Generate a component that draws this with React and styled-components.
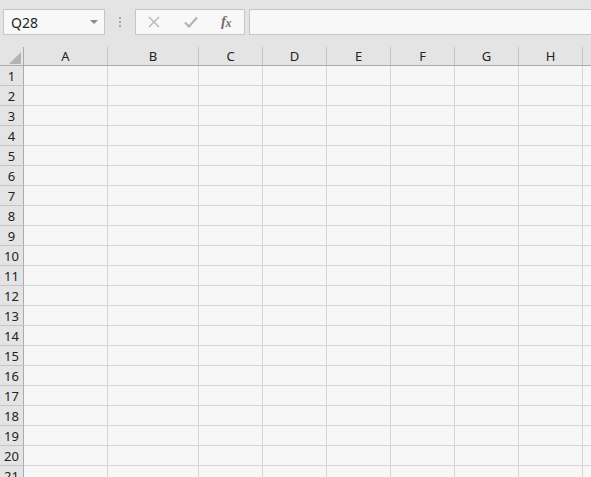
import React from "react";
import styled, { createGlobalStyle } from "styled-components";

const COLS = [
  { label: "A", width: 84 },
  { label: "B", width: 91 },
  { label: "C", width: 64 },
  { label: "D", width: 64 },
  { label: "E", width: 64 },
  { label: "F", width: 64 },
  { label: "G", width: 64 },
  { label: "H", width: 64 },
  { label: "", width: 64 },
];
const ROW_COUNT = 21;

const GlobalStyle = createGlobalStyle`
  html, body {
    margin: 0;
    padding: 0;
    height: 100%;
    overflow: hidden;
    background: #e8e8e8;
    font-family: "Segoe UI", "Noto Sans", "Liberation Sans", sans-serif;
  }
`;

const Sheet = styled.div`
  width: 591px;
  height: 477px;
  overflow: hidden;
  display: flex;
  flex-direction: column;
  background-color: #e8e8e8;
  background-image: radial-gradient(rgba(0, 0, 0, 0.035) 0.6px, transparent 0.8px);
  background-size: 2px 2px;
`;

const FormulaBar = styled.div`
  flex-shrink: 0;
  display: flex;
  align-items: flex-start;
  height: 47px;
  padding: 9px 0 0 3px;
  box-sizing: border-box;
`;

const Field = styled.div`
  height: 26px;
  box-sizing: border-box;
  border: 1px solid #c6c6c6;
  background: #f8f8f8;
  display: flex;
  align-items: center;
`;

const NameBox = styled(Field)`
  width: 102px;
  padding: 0 6px 0 7px;
  justify-content: space-between;
  font-size: 14px;
  color: #262626;
`;

const Caret = styled.span`
  width: 0;
  height: 0;
  border-left: 4px solid transparent;
  border-right: 4px solid transparent;
  border-top: 4px solid #8a8a8a;
`;

const Grip = styled.div`
  width: 30px;
  height: 26px;
  display: flex;
  flex-direction: column;
  align-items: center;
  justify-content: center;
  gap: 2px;

  span {
    width: 2px;
    height: 2px;
    background: #a6a6a6;
  }
`;

const ButtonBox = styled(Field)`
  width: 110px;
  padding: 0 13px 0 12px;
  justify-content: space-between;
`;

const Fx = styled.span`
  font-family: "Liberation Serif", "DejaVu Serif", serif;
  font-style: italic;
  font-weight: bold;
  font-size: 15px;
  color: #707070;
  letter-spacing: -0.5px;
  padding-bottom: 2px;

  sub {
    font-size: 12px;
    vertical-align: baseline;
    position: relative;
    top: 1px;
  }
`;

const FormulaInput = styled(Field)`
  flex: 1;
  margin-left: 4px;
  border-right: none;
`;

const Grid = styled.div`
  flex-shrink: 0;
  display: grid;
  grid-template-columns: 24px ${COLS.map((c) => `${c.width}px`).join(" ")};
  grid-template-rows: 19px;
  grid-auto-rows: 20px;
`;

const ColHeader = styled.div`
  box-sizing: border-box;
  border-right: 1px solid ${(p) => (p.corner ? "#ababab" : "#c4c4c4")};
  border-bottom: 1px solid #ababab;
  display: flex;
  justify-content: ${(p) => (p.corner ? "flex-end" : "center")};
  align-items: ${(p) => (p.corner ? "flex-end" : "center")};
  padding: ${(p) => (p.corner ? "0 2px 1px 0" : "0 0 1px 0")};
  font-size: 13px;
  color: #222;
`;

const RowHeader = styled.div`
  box-sizing: border-box;
  border-right: 1px solid #ababab;
  border-bottom: 1px solid #c4c4c4;
  display: flex;
  align-items: center;
  justify-content: center;
  padding-top: 1px;
  font-size: 13px;
  color: #222;
`;

const Cell = styled.div`
  box-sizing: border-box;
  background: #f7f7f7;
  border-right: 1px solid #d5d5d5;
  border-bottom: 1px solid #d5d5d5;
`;

const CornerMark = () => (
  <svg width="12" height="12" viewBox="0 0 12 12">
    <polygon points="0,12 12,0 12,12" fill="#b3b3b3" />
  </svg>
);

const CancelIcon = () => (
  <svg width="12" height="12" viewBox="0 0 12 12">
    <path d="M1 1 L11 11 M11 1 L1 11" stroke="#b4b4b4" strokeWidth="1.4" fill="none" />
  </svg>
);

const EnterIcon = () => (
  <svg width="14" height="12" viewBox="0 0 14 12">
    <path d="M1 6.5 L5 10.5 L13 1.5" stroke="#b4b4b4" strokeWidth="2.2" fill="none" />
  </svg>
);

const App = () => {
  const rows = Array.from({ length: ROW_COUNT }, (_, i) => i + 1);

  return (
    <>
      <GlobalStyle />
      <Sheet>
        <FormulaBar>
          <NameBox>
            Q28
            <Caret />
          </NameBox>
          <Grip>
            <span />
            <span />
            <span />
          </Grip>
          <ButtonBox>
            <CancelIcon />
            <EnterIcon />
            <Fx>
              f<sub>x</sub>
            </Fx>
          </ButtonBox>
          <FormulaInput />
        </FormulaBar>

        <Grid>
          <ColHeader corner>
            <CornerMark />
          </ColHeader>
          {COLS.map((c, i) => (
            <ColHeader key={i}>{c.label}</ColHeader>
          ))}
          {rows.map((r) => (
            <React.Fragment key={r}>
              <RowHeader>{r}</RowHeader>
              {COLS.map((c, i) => (
                <Cell key={i} />
              ))}
            </React.Fragment>
          ))}
        </Grid>
      </Sheet>
    </>
  );
};

export default App;
